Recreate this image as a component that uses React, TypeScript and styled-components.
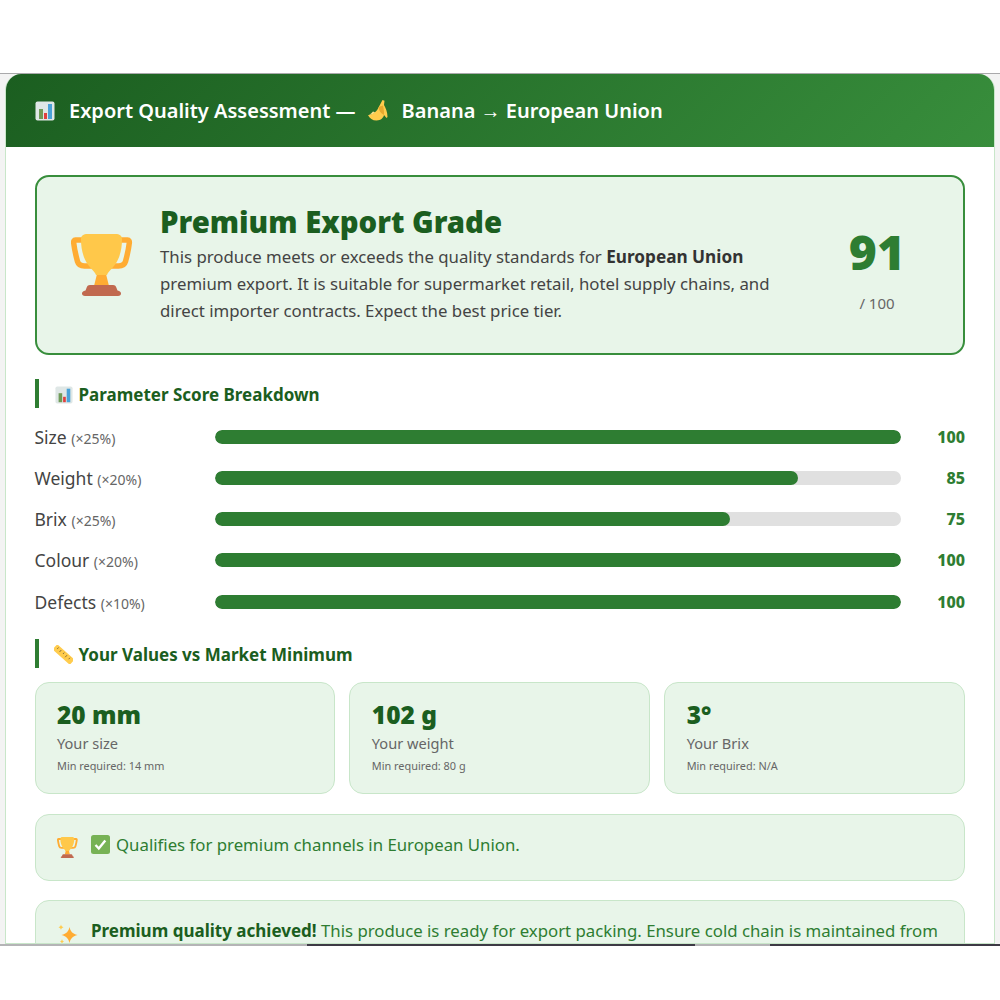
import React from "react";
import styled, { createGlobalStyle } from "styled-components";

const Global = createGlobalStyle`
  html, body {
    margin: 0;
    padding: 0;
    background: #fff;
  }
  * {
    box-sizing: border-box;
  }
`;

const Page = styled.div`
  height: 1000px;
  display: flex;
  flex-direction: column;
  font-family: "Noto Sans", "Open Sans", sans-serif;
  color: #333;
  background: #fff;
`;

const TopGap = styled.div`
  height: 73px;
  flex: none;
`;

const Viewport = styled.div`
  height: 871px;
  flex: none;
  overflow: hidden;
  background: #f3f3f3;
  border-top: 1px solid #a9a9ab;
  padding: 0 5px;
`;

const BottomEdge = styled.div`
  height: 2px;
  flex: none;
  display: flex;
`;

const EdgeSegment = styled.div<{ $dark?: boolean; $width: number }>`
  flex: ${(p) => p.$width} 0 0;
  background: ${(p) => (p.$dark ? "#3d3a45" : "#b4b4b6")};
`;

const Card = styled.section`
  background: #fff;
  border: 1px solid #c8e6c9;
  border-top: 0;
  border-radius: 16px 16px 0 0;
  height: 100%;
  overflow: hidden;
`;

const Header = styled.header`
  height: 73px;
  padding: 0 29px;
  display: flex;
  align-items: center;
  background: linear-gradient(135deg, #1b5e20, #388e3c);
  color: #fff;
  font-size: 20px;
  font-weight: 600;
`;

const HeaderLead = styled.span`
  margin-left: 14px;
`;

const Body = styled.div`
  padding: 28px 29px 0 28.5px;
  display: flex;
  flex-direction: column;
`;

const Hero = styled.div`
  height: 180px;
  display: flex;
  align-items: center;
  background: #e8f5e9;
  border: 2px solid #388e3c;
  border-radius: 14px;
  padding: 0 26px 0 34.5px;
  gap: 27px;
`;

const HeroText = styled.div`
  flex: 1;
  min-width: 0;
  padding-bottom: 2px;
`;

const HeroTitle = styled.h2`
  margin: 0 0 4px;
  font-size: 29.3px;
  line-height: 34px;
  font-weight: 900;
  color: #1b5e20;
`;

const HeroCopy = styled.p`
  margin: 0;
  font-size: 16.8px;
  line-height: 27px;
  color: #444;
  max-width: 625px;

  strong {
    font-size: 17.2px;
    font-weight: 700;
    color: #333;
  }
`;

const Score = styled.div`
  width: 120px;
  flex: none;
  display: flex;
  flex-direction: column;
  align-items: center;
  padding-top: 5px;
`;

const ScoreValue = styled.div`
  font-size: 48px;
  line-height: 60px;
  font-weight: 900;
  color: #2e7d32;
`;

const ScoreMax = styled.div`
  font-size: 15px;
  line-height: 20px;
  margin-top: 11px;
  color: #666;
`;

const SectionTitle = styled.h3<{ $top: number }>`
  margin: ${(p) => p.$top}px 0 0;
  height: 29px;
  display: flex;
  align-items: center;
  gap: 6px;
  border-left: 4px solid #2e7d32;
  padding: 2px 0 0 16px;
  font-size: 17px;
  font-weight: 700;
  color: #1b5e20;
`;

const Bars = styled.div`
  margin-top: 8px;
  display: flex;
  flex-direction: column;
`;

const BarRow = styled.div`
  height: 41.25px;
  display: flex;
  align-items: center;
`;

const BarLabel = styled.div`
  width: 180.5px;
  flex: none;
  font-size: 17.5px;
  color: #444;
  white-space: nowrap;

  small {
    font-size: 14px;
    color: #666;
  }
`;

const Track = styled.div`
  flex: 1;
  height: 14px;
  border-radius: 7px;
  background: #e0e0e0;
  overflow: hidden;
`;

const Fill = styled.div`
  height: 100%;
  border-radius: 7px;
  background: #2e7d32;
`;

const BarValue = styled.div`
  width: 64px;
  flex: none;
  text-align: right;
  font-size: 16px;
  font-weight: 800;
  color: #2e7d32;
`;

const Tiles = styled.div`
  margin-top: 14px;
  display: grid;
  grid-template-columns: repeat(3, 1fr);
  gap: 14px;
`;

const Tile = styled.div`
  height: 112px;
  padding: 16px 21.5px;
  background: #e8f5e9;
  border: 1px solid #c8e6c9;
  border-radius: 14px;
`;

const TileValue = styled.div`
  font-size: 24.5px;
  line-height: 32px;
  font-weight: 900;
  color: #1b5e20;
`;

const TileLabel = styled.div`
  font-size: 14.6px;
  line-height: 20px;
  margin-top: 2px;
  color: #666;
`;

const TileMin = styled.div`
  font-size: 10.9px;
  line-height: 16px;
  margin-top: 5px;
  color: #666;
`;

const Note = styled.div<{ $top: number }>`
  margin-top: ${(p) => p.$top}px;
  display: flex;
  align-items: flex-start;
  gap: 13px;
  padding: 16px 21.5px;
  background: #e8f5e9;
  border: 1px solid #c8e6c9;
  border-radius: 14px;
  font-size: 16.8px;
  line-height: 28px;
  color: #2e7d32;

  strong {
    color: #1b5e20;
    font-size: 17px;
    font-weight: 700;
  }
`;

const NoteIcon = styled.span`
  flex: none;
  height: 33px;
  display: flex;
  align-items: center;
`;

const Glyph = styled.svg<{ $left?: number; $right?: number }>`
  flex: none;
  vertical-align: -3px;
  margin-left: ${(p) => p.$left ?? 0}px;
  margin-right: ${(p) => p.$right ?? 0}px;
`;

const BarChartIcon = ({ size = 20 }: { size?: number }) => (
  <Glyph width={size} height={size} viewBox="0 0 20 20">
    <rect x="0.5" y="0.5" width="19" height="19" rx="2" fill="#dfe7e6" />
    <path d="M4 8h4v10H4z" fill="#6f9b57" />
    <path d="M9 12h3v6H9z" fill="#e0403f" />
    <path d="M13 3h4v15h-4z" fill="#4aa2d8" />
  </Glyph>
);

const BananaIcon = () => (
  <Glyph width={20} height={21} viewBox="0 0 20 21" $left={12} $right={14}>
    <path d="M0 15c3.500 0 8-2 10.500-7.500L14.500 0l2 .8-.5 4.200c1.500 2.500 3.500 7 3.500 12l-1 1-2.500-3c-.5 2.500-3 5.500-7.500 5.500C4.500 20.500 1.500 18.500 0 15z" fill="#ffcc4d" />
    <path d="M10.500 7.500c.5 3 2 5.500 5.500 7.500.3-3-.5-7-1-9.500-1.500.5-3.500 1-4.500 2z" fill="#e8a92e" />
    <path d="M5 11.500c-1 1-2 2.500-4 3.300 2.500.2 5-.8 6-2.500z" fill="#fbe08a" />
  </Glyph>
);

const TrophyIcon = ({ size }: { size: number }) => (
  <Glyph width={size} height={size} viewBox="11 9 62 62">
    <path d="M26 15H15.500c-1.500 0-2 1-1.800 3 .8 7 2.300 13 3.800 18.500 1 3.500 3.500 4.500 7 4.500H33" fill="none" stroke="#ffac33" strokeWidth="5.500" />
    <path d="M57 15h10.500c1.500 0 2 1 1.800 3-.8 7-2.300 13-3.800 18.500-1 3.500-3.500 4.500-7 4.500H50" fill="none" stroke="#ffac33" strokeWidth="5.500" />
    <path d="M37.500 47h8l3.500 14H34z" fill="#ffac33" />
    <path d="M27.500 9h28c4 0 6.500 1.500 6.500 5 0 10-2 18-6.500 25-3 4.500-7 7-8.500 11H36c-1.500-4-5.500-6.500-8.500-11C23 32 21 24 21 14c0-3.500 2.500-5 6.500-5z" fill="#ffc84a" />
    <path d="M30 60h23c2 0 3 1 3.500 3l1 2.500c2.500.5 3.500 1.500 3.500 3 0 1.500-1 2.500-3 2.500H25c-2 0-3-1-3-2.500s1-2.500 3.500-3l1-2.500c.5-2 1.500-3 3.500-3z" fill="#c1694f" />
  </Glyph>
);

const RulerIcon = () => (
  <Glyph width={19} height={19} viewBox="0 0 19 19" $left={-1}>
    <rect x="-2" y="6" width="23" height="7" rx="1.500" fill="#ffcc4d" transform="rotate(42 9.500 9.500)" />
    <path d="M4.500 2.500l-1.200 1.400M7.300 5l-1.800 2M10.200 7.600l-1.200 1.400M13 10.200l-1.800 2M15.900 12.800l-1.200 1.400" stroke="#8a6d3b" strokeWidth="1" />
  </Glyph>
);

const CheckIcon = () => (
  <Glyph width={19} height={19} viewBox="0 0 19 19" $right={6}>
    <rect width="19" height="19" rx="2.500" fill="#77b255" />
    <path d="M4.500 10l3.300 3.500 6.500-8" fill="none" stroke="#fff" strokeWidth="2.400" />
  </Glyph>
);

const SparkleIcon = () => (
  <Glyph width={21} height={22} viewBox="0 0 21 22">
    <path d="M12.500 4c1 4.500 2.800 6.500 8 8-5.200 1.500-7 3.500-8 8-1-4.500-2.800-6.500-8-8 5.200-1.500 7-3.500 8-8z" fill="#ffac33" />
    <path d="M4 1.500c.3 1.500 1 2.200 2.500 2.700C5 4.700 4.300 5.400 4 7c-.3-1.600-1-2.300-2.500-2.800C3 3.700 3.700 3 4 1.500zM5 16c.3 1.500.8 2 2 2.500-1.200.5-1.700 1-2 2.500-.3-1.500-.8-2-2-2.500 1.200-.5 1.700-1 2-2.500z" fill="#ffcc4d" />
  </Glyph>
);

const SCORES = [
  { name: "Size", weight: 25, score: 100 },
  { name: "Weight", weight: 20, score: 85 },
  { name: "Brix", weight: 25, score: 75 },
  { name: "Colour", weight: 20, score: 100 },
  { name: "Defects", weight: 10, score: 100 },
];

const VALUES = [
  { value: "20 mm", label: "Your size", min: "14 mm" },
  { value: "102 g", label: "Your weight", min: "80 g" },
  { value: "3°", label: "Your Brix", min: "N/A" },
];

export default function App() {
  return (
    <Page>
      <Global />
      <TopGap />
      <Viewport>
        <Card>
          <Header>
            <BarChartIcon />
            <HeaderLead>Export Quality Assessment —</HeaderLead>
            <BananaIcon />
            <span>Banana → European Union</span>
          </Header>
          <Body>
            <Hero>
              <TrophyIcon size={62} />
              <HeroText>
                <HeroTitle>Premium Export Grade</HeroTitle>
                <HeroCopy>
                  This produce meets or exceeds the quality standards for <strong>European Union</strong> premium
                  export. It is suitable for supermarket retail, hotel supply chains, and direct importer contracts.
                  Expect the best price tier.
                </HeroCopy>
              </HeroText>
              <Score>
                <ScoreValue>91</ScoreValue>
                <ScoreMax>/ 100</ScoreMax>
              </Score>
            </Hero>

            <SectionTitle $top={24}>
              <BarChartIcon size={18} />
              Parameter Score Breakdown
            </SectionTitle>
            <Bars>
              {SCORES.map((s) => (
                <BarRow key={s.name}>
                  <BarLabel>
                    {s.name} <small>(×{s.weight}%)</small>
                  </BarLabel>
                  <Track>
                    <Fill style={{ width: `${s.score}%` }} />
                  </Track>
                  <BarValue>{s.score}</BarValue>
                </BarRow>
              ))}
            </Bars>

            <SectionTitle $top={17}>
              <RulerIcon />
              Your Values vs Market Minimum
            </SectionTitle>
            <Tiles>
              {VALUES.map((v) => (
                <Tile key={v.label}>
                  <TileValue>{v.value}</TileValue>
                  <TileLabel>{v.label}</TileLabel>
                  <TileMin>Min required: {v.min}</TileMin>
                </Tile>
              ))}
            </Tiles>

            <Note $top={20}>
              <NoteIcon>
                <TrophyIcon size={21} />
              </NoteIcon>
              <span>
                <CheckIcon />
                Qualifies for premium channels in European Union.
              </span>
            </Note>
            <Note $top={19}>
              <NoteIcon>
                <SparkleIcon />
              </NoteIcon>
              <span>
                <strong>Premium quality achieved!</strong> This produce is ready for export packing. Ensure cold chain
                is maintained from harvest to delivery.
              </span>
            </Note>
          </Body>
        </Card>
      </Viewport>
      <BottomEdge>
        <EdgeSegment $width={307} />
        <EdgeSegment $width={388} $dark />
        <EdgeSegment $width={75} />
        <EdgeSegment $width={230} $dark />
      </BottomEdge>
    </Page>
  );
}
